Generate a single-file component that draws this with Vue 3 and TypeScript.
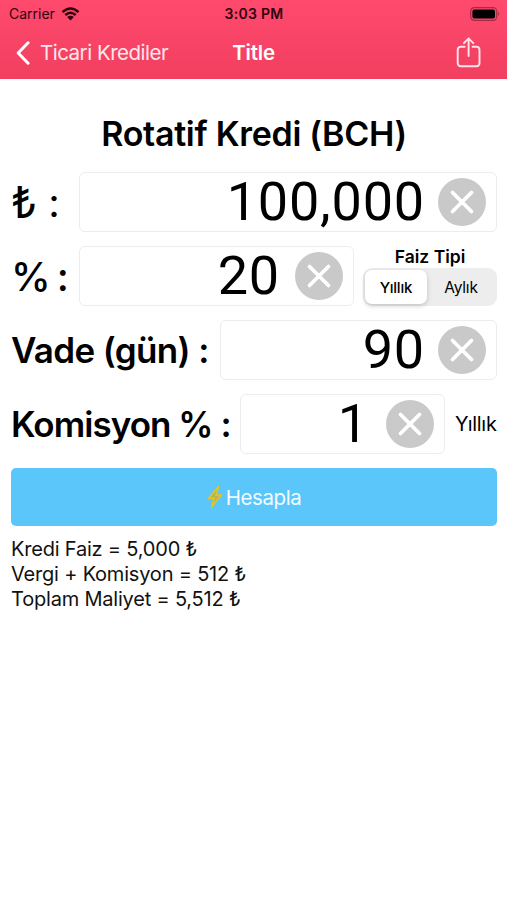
<script setup lang="ts">
import { computed, ref } from 'vue'

type RateType = 'Yıllık' | 'Aylık'

const rateTypes: RateType[] = ['Yıllık', 'Aylık']
const rateType = ref<RateType>('Yıllık')
const amount = ref('100,000')
const rate = ref('20')
const days = ref('90')
const commission = ref('1')

const toNumber = (text: string): number => Number(text.replace(/,/g, '')) || 0
const format = (value: number): string => Math.round(value).toLocaleString('en-US')

const calculate = () => {
  const factor = rateType.value === 'Yıllık' ? 360 : 30
  const interest = (toNumber(amount.value) * toNumber(rate.value) * toNumber(days.value)) / (100 * factor)
  const fee = (toNumber(amount.value) * toNumber(commission.value) * toNumber(days.value)) / 36000
  const taxAndFee = interest * 0.05 + fee * 1.05
  return { interest, taxAndFee, total: interest + Math.floor(taxAndFee) }
}

const result = ref(calculate())
const lines = computed(() => [
  { label: 'Kredi Faiz', value: format(result.value.interest) },
  { label: 'Vergi + Komisyon', value: format(Math.floor(result.value.taxAndFee)) },
  { label: 'Toplam Maliyet', value: format(result.value.total) },
])
</script>

<template>
  <main class="screen">
    <header class="top">
      <div class="status">
        <div class="carrier">
          <span>Carrier</span>
          <svg class="wifi" viewBox="0 0 18 14">
            <path d="M1 5.2Q9-2.2 17 5.2M3.8 8Q9 3.4 14.2 8" fill="none" stroke="currentColor" stroke-width="2.5" />
            <path d="M5.6 10.1Q9 7.2 12.4 10.1L9 13.6Z" fill="currentColor" />
          </svg>
        </div>
        <span class="clock">3:03 PM</span>
        <svg class="battery" viewBox="0 0 31 14">
          <rect x="0.7" y="0.7" width="26" height="12.6" rx="3.6" fill="none" stroke="#a62c46" stroke-width="1.2" />
          <rect x="2.4" y="2.4" width="22.6" height="9.2" rx="2" fill="#000" />
          <path d="M28.2 4.8Q30.4 7 28.2 9.2Z" fill="#a62c46" />
        </svg>
      </div>
      <nav class="nav">
        <button class="back" type="button">
          <svg class="chevron" viewBox="0 0 14 24">
            <path d="M12.1 1.8 2.2 12l9.9 10.2" fill="none" stroke="currentColor" stroke-width="3" stroke-linecap="round" stroke-linejoin="round" />
          </svg>
          <span>Ticari Krediler</span>
        </button>
        <span class="nav-title">Title</span>
        <button class="share" type="button" aria-label="Paylaş">
          <svg viewBox="0 0 26 32">
            <path d="M8.6 9.8H4.9Q1.7 9.8 1.7 13V26Q1.7 29.2 4.9 29.2H20.3Q23.5 29.2 23.5 26V13Q23.5 9.8 20.3 9.8H16.6M12.6 19V1.8M7.9 6.1 12.6 1.4 17.3 6.1" fill="none" stroke="currentColor" stroke-width="1.9" stroke-linecap="round" stroke-linejoin="round" />
          </svg>
        </button>
      </nav>
    </header>

    <section class="form">
      <h1 class="heading">Rotatif Kredi (BCH)</h1>

      <div class="row">
        <label class="label label-lira" for="amount"><span class="lira">₺</span><span>:</span></label>
        <div class="field">
          <input id="amount" v-model="amount" class="input" type="text" />
          <button class="clear" type="button" aria-label="Sil" @click="amount = ''">
            <svg viewBox="0 0 48 48"><path d="m14.5 14.5 19 19m0-19-19 19" /></svg>
          </button>
        </div>
      </div>

      <div class="row">
        <label class="label label-percent" for="rate"><span>%</span><span>:</span></label>
        <div class="field">
          <input id="rate" v-model="rate" class="input input-rate" type="text" />
          <button class="clear" type="button" aria-label="Sil" @click="rate = ''">
            <svg viewBox="0 0 48 48"><path d="m14.5 14.5 19 19m0-19-19 19" /></svg>
          </button>
        </div>
        <div class="type">
          <span class="type-title">Faiz Tipi</span>
          <div class="segments">
            <button
              v-for="item in rateTypes"
              :key="item"
              type="button"
              class="segment"
              :class="{ active: item === rateType }"
              @click="rateType = item"
            >{{ item }}</button>
          </div>
        </div>
      </div>

      <div class="row">
        <label class="label label-days" for="days">Vade (gün) :</label>
        <div class="field">
          <input id="days" v-model="days" class="input" type="text" />
          <button class="clear" type="button" aria-label="Sil" @click="days = ''">
            <svg viewBox="0 0 48 48"><path d="m14.5 14.5 19 19m0-19-19 19" /></svg>
          </button>
        </div>
      </div>

      <div class="row">
        <label class="label label-commission" for="commission">Komisyon % :</label>
        <div class="field">
          <input id="commission" v-model="commission" class="input input-commission" type="text" />
          <button class="clear" type="button" aria-label="Sil" @click="commission = ''">
            <svg viewBox="0 0 48 48"><path d="m14.5 14.5 19 19m0-19-19 19" /></svg>
          </button>
        </div>
        <span class="period">Yıllık</span>
      </div>

      <button class="submit" type="button" @click="result = calculate()">
        <svg class="bolt" viewBox="0 0 16 24">
          <path d="M11.6 1.6 1.4 13.4 7 13.1 4.6 22 14.6 9.8 9 10.2Z" fill="#b5b45a" stroke="#e3c51f" stroke-width="1.5" stroke-linejoin="round" />
        </svg>
        <span>Hesapla</span>
      </button>

      <div class="results">
        <p v-for="line in lines" :key="line.label" class="result">{{ line.label }} = {{ line.value }} ₺</p>
      </div>
    </section>
  </main>
</template>

<style>
body {
  margin: 0;
  background: #fff;
}
</style>

<style scoped>
.screen {
  box-sizing: border-box;
  width: 100%;
  height: 900px;
  overflow: hidden;
  background: #fff;
  color: #000;
  font-family: Inter, "Liberation Sans", sans-serif;
  font-feature-settings: "calt" 0;
}

button,
input {
  margin: 0;
  padding: 0;
  border: 0;
  background: none;
  color: inherit;
  font: inherit;
}

svg {
  display: block;
}

.top {
  height: 79px;
  background: linear-gradient(#ff4a6d, #f13f60);
}

.status {
  display: grid;
  grid-template-columns: 1fr auto 1fr;
  align-items: center;
  height: 27px;
  padding: 0 6px 0 9px;
  color: #30050f;
  font-size: 14px;
}

.carrier {
  display: flex;
  align-items: center;
  gap: 6px;
}

.wifi {
  width: 19px;
  height: 14px;
}

.clock {
  margin-right: 2px;
  font-size: 14px;
  font-weight: 600;
  letter-spacing: 0.3px;
}

.battery {
  width: 31px;
  height: 14px;
  justify-self: end;
}

.nav {
  display: grid;
  grid-template-columns: 1fr auto 1fr;
  align-items: center;
  height: 52px;
  padding: 0 16px 2px;
  color: #fff;
  font-size: 20.5px;
}

.back {
  display: flex;
  align-items: center;
  gap: 10px;
  color: #ffe6eb;
  letter-spacing: -0.5px;
  white-space: nowrap;
}

.back span,
.nav-title {
  padding-bottom: 2px;
}

.chevron {
  width: 14px;
  height: 24px;
  color: #fff;
}

.nav-title {
  font-weight: 600;
  letter-spacing: -0.2px;
}

.share {
  justify-self: end;
  margin-right: 9px;
  color: #ffe6eb;
}

.share svg {
  width: 26px;
  height: 32px;
}

.form {
  display: flex;
  flex-direction: column;
  gap: 14px;
  padding: 33px 10px 0 11px;
}

.heading {
  height: 46px;
  margin: 0;
  font-size: 34px;
  font-weight: 600;
  letter-spacing: -0.3px;
  line-height: 43px;
  text-align: center;
  white-space: nowrap;
}

.row {
  display: flex;
  height: 60px;
}

.label {
  display: flex;
  flex: none;
  align-items: center;
  box-sizing: border-box;
  font-size: 35px;
  font-weight: 600;
  white-space: nowrap;
}

.label-lira {
  gap: 11px;
  width: 68px;
  font-size: 40px;
  font-weight: 400;
}

.lira {
  font-size: 44px;
}

.label-percent {
  gap: 7px;
  width: 68px;
  font-size: 40px;
  font-weight: 500;
  letter-spacing: -1px;
}

.label-days {
  width: 209px;
  letter-spacing: -0.65px;
}

.label-commission {
  width: 229px;
  letter-spacing: -0.95px;
}

.field {
  display: flex;
  flex: 1;
  align-items: center;
  box-sizing: border-box;
  min-width: 0;
  padding-right: 10px;
  border: 1px solid #ececec;
  border-radius: 6px;
}

.input {
  flex: 1;
  box-sizing: border-box;
  width: 0;
  min-width: 0;
  height: 58px;
  padding-bottom: 2px;
  outline: none;
  font-family: Roboto, "Liberation Sans", sans-serif;
  font-size: 54px;
  letter-spacing: 0.8px;
  text-align: right;
}

.input-rate {
  padding-right: 2px;
}

.input-commission {
  padding-right: 4px;
}

.clear {
  flex: none;
  width: 48px;
  height: 48px;
  margin-left: 13px;
  border-radius: 50%;
  background: #c9c9c9;
}

.clear path {
  fill: none;
  stroke: #fff;
  stroke-width: 3.8;
  stroke-linecap: round;
}

.type {
  display: flex;
  flex: none;
  flex-direction: column;
  align-items: center;
  width: 134px;
  margin-left: 9px;
}

.type-title {
  height: 22px;
  font-size: 17.5px;
  font-weight: 600;
  line-height: 22px;
}

.segments {
  display: grid;
  grid-template-columns: 62px 1fr;
  box-sizing: border-box;
  width: 100%;
  height: 38px;
  padding: 2px;
  border-radius: 9px;
  background: #ededee;
}

.segment {
  border-radius: 7px;
  font-size: 15.5px;
  letter-spacing: -0.2px;
}

.segment.active {
  background: #fff;
  box-shadow: 0 2px 5px rgba(0, 0, 0, 0.18);
  font-size: 15px;
  font-weight: 500;
}

.period {
  flex: none;
  align-self: center;
  width: 42px;
  margin-left: 10px;
  font-size: 20px;
  letter-spacing: -0.3px;
  white-space: nowrap;
}

.submit {
  display: flex;
  align-items: center;
  justify-content: center;
  height: 58px;
  border-radius: 5px;
  background: #5bc6fa;
  color: #f2fbff;
  font-size: 20.5px;
  letter-spacing: -0.4px;
}

.bolt {
  width: 16px;
  height: 24px;
  margin-right: 3px;
}

.results {
  margin-top: -3px;
}

.result {
  height: 25px;
  margin: 0;
  color: #111;
  font-size: 20px;
  letter-spacing: -0.2px;
  line-height: 25px;
  white-space: nowrap;
}
</style>
